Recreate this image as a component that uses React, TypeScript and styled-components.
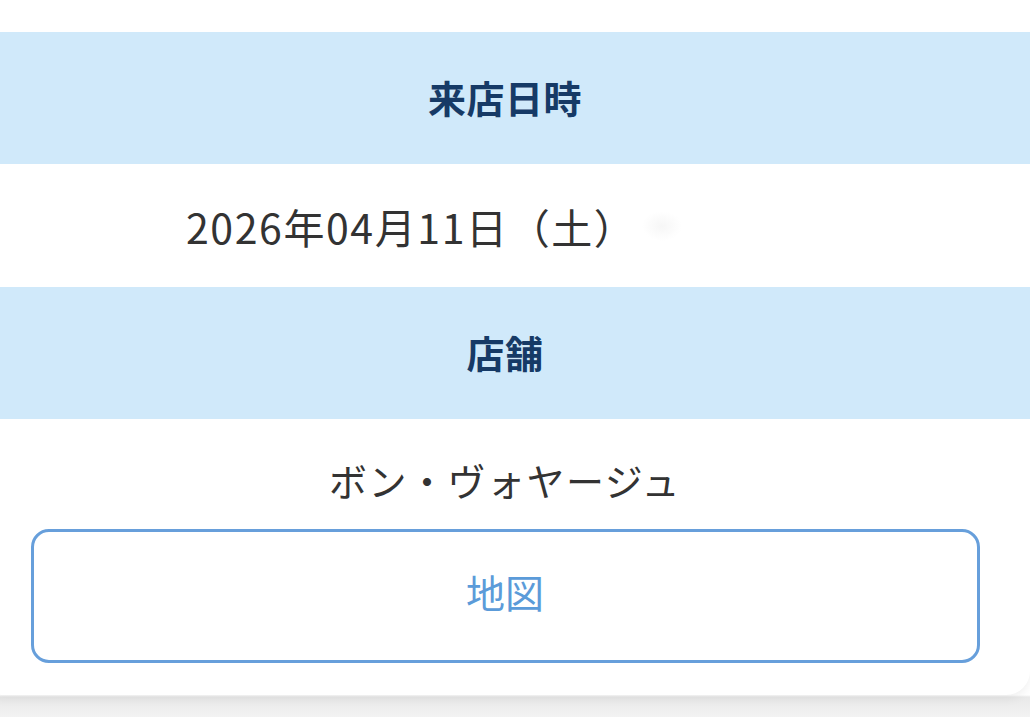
import React from "react";
import styled, { createGlobalStyle } from "styled-components";

const Global = createGlobalStyle`
  html, body { margin: 0; padding: 0; }
  body {
    background: #efefef;
    font-family: "Noto Sans CJK JP", "Noto Sans", sans-serif;
    overflow: hidden;
  }
`;

const Page = styled.div`
  width: 1030px;
  height: 717px;
  overflow: hidden;
  background: linear-gradient(#ffffff 0, #ffffff 695px, #e9e9e9 697px, #f3f3f3 717px);
`;

const Card = styled.div`
  margin-left: -20px;
  width: 1050px;
  height: 695px;
  box-sizing: border-box;
  padding-top: 32px;
  background: #ffffff;
  border-radius: 0 0 24px 24px;
  box-shadow: 0 4px 10px rgba(0, 0, 0, 0.06);
  display: flex;
  flex-direction: column;
`;

const Band = styled.div`
  height: 132px;
  box-sizing: border-box;
  padding-bottom: 4px;
  background: #d0e9fa;
  display: flex;
  align-items: center;
  justify-content: center;
  color: #163a66;
  font-weight: 700;
  font-size: 38px;
  letter-spacing: 0.5px;
`;

const DateRow = styled.div`
  height: 123px;
  display: flex;
  align-items: center;
  padding-left: 206px;
  color: #333333;
  font-size: 41px;
  letter-spacing: 1.6px;
`;

const Blur = styled.span`
  display: inline-block;
  width: 40px;
  height: 30px;
  margin-left: 6px;
  background: radial-gradient(rgba(240, 240, 240, 0.6), rgba(255, 255, 255, 0) 70%);
`;

const StoreSection = styled.div`
  display: flex;
  flex-direction: column;
  align-items: center;
  padding: 38px 71px 0;
  gap: 26px;
`;

const StoreName = styled.div`
  color: #333333;
  font-size: 38px;
  line-height: 46px;
  letter-spacing: 1.5px;
`;

const MapButton = styled.button`
  width: 949px;
  height: 134px;
  box-sizing: border-box;
  padding: 0 0 10px;
  border: 3px solid #679fdb;
  border-radius: 18px;
  background: #ffffff;
  color: #5b9bd9;
  font-family: "Noto Sans CJK JP", "Noto Sans", sans-serif;
  font-size: 39px;
  cursor: pointer;
`;

export default function App() {
  return (
    <Page>
      <Global />
      <Card>
        <Band>来店日時</Band>
        <DateRow>
          2026年04月11日（土）
          <Blur />
        </DateRow>
        <Band>店舗</Band>
        <StoreSection>
          <StoreName>ボン・ヴォヤージュ</StoreName>
          <MapButton>地図</MapButton>
        </StoreSection>
      </Card>
    </Page>
  );
}
